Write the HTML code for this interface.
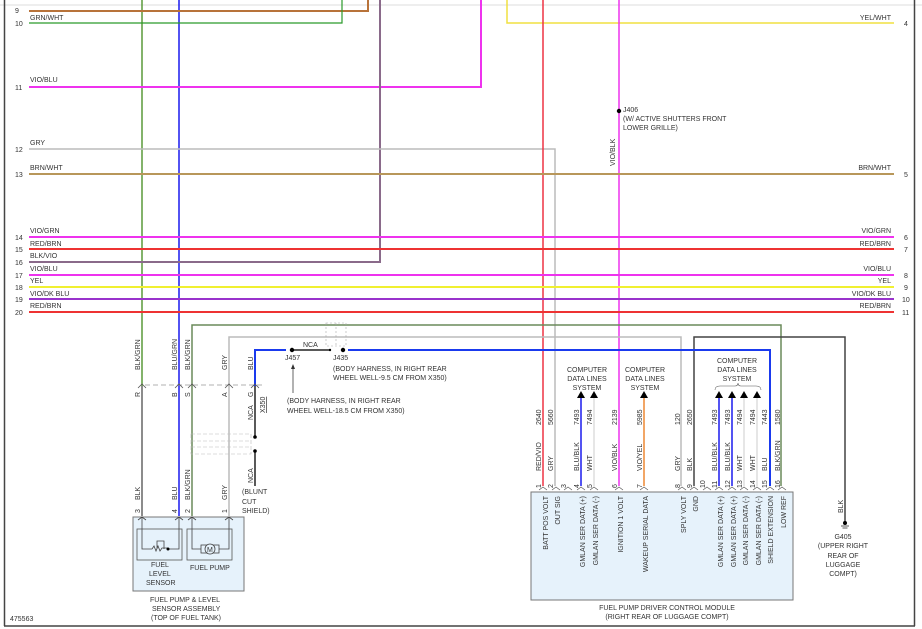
<!DOCTYPE html>
<html><head><meta charset="utf-8"><style>
html,body{margin:0;padding:0;background:#fff;}
svg{display:block;font-family:"Liberation Sans",Arial,sans-serif;}
text{fill:#333;font-size:7px;}
</style></head><body>
<svg width="922" height="629" viewBox="0 0 922 629" xmlns="http://www.w3.org/2000/svg">
<!-- frame -->
<line x1="0" y1="5" x2="922" y2="5" stroke="#ddd" stroke-width="1"/>
<line x1="4.5" y1="0" x2="4.5" y2="626" stroke="#444" stroke-width="1.5"/>
<line x1="914.5" y1="0" x2="914.5" y2="626" stroke="#444" stroke-width="1.5"/>
<line x1="4" y1="626" x2="915" y2="626" stroke="#444" stroke-width="1.5"/>

<!-- verticals from top -->
<line x1="142" y1="0" x2="142" y2="386" stroke="#5a9a3a" stroke-width="1.5"/>
<line x1="179" y1="0" x2="179" y2="386" stroke="#1a1aee" stroke-width="1.5"/>
<polyline points="368,0 368,11 29,11" fill="none" stroke="#b8733a" stroke-width="2"/>
<polyline points="342,0 342,23 29,23" fill="none" stroke="#2a9a2a" stroke-width="1.2"/>
<polyline points="481,0 481,87 29,87" fill="none" stroke="#ee33ee" stroke-width="2"/>
<polyline points="380,0 380,262 29,262" fill="none" stroke="#8a6a8a" stroke-width="2"/>
<polyline points="507,0 507,23 894,23" fill="none" stroke="#f0e040" stroke-width="1.5"/>
<polyline points="29,149 555,149 555,486" fill="none" stroke="#bbb" stroke-width="1.5"/>
<line x1="543" y1="0" x2="543" y2="486" stroke="#ee3344" stroke-width="1.5"/>
<line x1="619" y1="0" x2="619" y2="486" stroke="#ee33ee" stroke-width="1.5"/>
<circle cx="619" cy="111" r="2.2" fill="#000"/>
<text x="623" y="112">J406</text>
<text x="623" y="121">(W/ ACTIVE SHUTTERS FRONT</text>
<text x="623" y="130">LOWER GRILLE)</text>
<text transform="translate(615,166) rotate(-90)">VIO/BLK</text>

<!-- horizontal rows -->
<line x1="29" y1="174" x2="894" y2="174" stroke="#b8975a" stroke-width="2"/>
<line x1="29" y1="237" x2="894" y2="237" stroke="#ee33ee" stroke-width="2"/>
<line x1="29" y1="249" x2="894" y2="249" stroke="#ee3333" stroke-width="2"/>
<line x1="29" y1="275" x2="894" y2="275" stroke="#ee33ee" stroke-width="2"/>
<line x1="29" y1="287" x2="894" y2="287" stroke="#f0f030" stroke-width="2"/>
<line x1="29" y1="299" x2="894" y2="299" stroke="#9933cc" stroke-width="2"/>
<line x1="29" y1="312" x2="894" y2="312" stroke="#ee3333" stroke-width="2"/>

<!-- left labels -->
<g>
<text x="15" y="13">9</text><text x="15" y="26">10</text>
<text x="30" y="20">GRN/WHT</text>
<text x="30" y="82">VIO/BLU</text><text x="15" y="90">11</text>
<text x="30" y="145">GRY</text><text x="15" y="152">12</text>
<text x="30" y="170">BRN/WHT</text><text x="15" y="177">13</text>
<text x="30" y="233">VIO/GRN</text><text x="15" y="240">14</text>
<text x="30" y="246">RED/BRN</text><text x="15" y="252">15</text>
<text x="30" y="258">BLK/VIO</text><text x="15" y="265">16</text>
<text x="30" y="271">VIO/BLU</text><text x="15" y="278">17</text>
<text x="30" y="283">YEL</text><text x="15" y="290">18</text>
<text x="30" y="296">VIO/DK BLU</text><text x="15" y="302">19</text>
<text x="30" y="308">RED/BRN</text><text x="15" y="315">20</text>
</g>
<g text-anchor="end">
<text x="891" y="20">YEL/WHT</text>
<text x="891" y="170">BRN/WHT</text>
<text x="891" y="233">VIO/GRN</text>
<text x="891" y="246">RED/BRN</text>
<text x="891" y="271">VIO/BLU</text>
<text x="891" y="283">YEL</text>
<text x="891" y="296">VIO/DK BLU</text>
<text x="891" y="308">RED/BRN</text>
</g>
<g>
<text x="904" y="26">4</text><text x="904" y="177">5</text><text x="904" y="240">6</text>
<text x="904" y="252">7</text><text x="904" y="278">8</text><text x="904" y="290">9</text>
<text x="902" y="302">10</text><text x="902" y="315">11</text>
</g>

<!-- lower harness -->
<polyline points="192,516 192,325 781,325 781,486" fill="none" stroke="#6a8a5a" stroke-width="1.5"/>
<polyline points="229,516 229,337 681,337 681,486" fill="none" stroke="#bbb" stroke-width="1.5"/>
<polyline points="694,486 694,337 845,337 845,522" fill="none" stroke="#444" stroke-width="1.5"/>
<polyline points="255,386 255,350 286,350" fill="none" stroke="#1a3aee" stroke-width="2"/>
<line x1="292" y1="350" x2="330" y2="350" stroke="#222" stroke-width="1.5"/>
<polyline points="348,350 770,350 770,486" fill="none" stroke="#1a3aee" stroke-width="2"/>
<circle cx="292" cy="350" r="2.2" fill="#000"/><circle cx="343" cy="350" r="2.2" fill="#000"/>
<circle cx="330" cy="350" r="1.2" fill="#000"/>
<rect x="326" y="323" width="20" height="23" fill="none" stroke="#aaa" stroke-width="0.6" stroke-dasharray="2,2"/>
<line x1="336" y1="323" x2="336" y2="346" stroke="#aaa" stroke-width="0.6" stroke-dasharray="2,2"/>
<text x="303" y="347">NCA</text>
<text x="285" y="360">J457</text><text x="333" y="360">J435</text>
<text x="333" y="371">(BODY HARNESS, IN RIGHT REAR</text>
<text x="333" y="380">WHEEL WELL-9.5 CM FROM X350)</text>
<line x1="293" y1="367" x2="293" y2="393" stroke="#666" stroke-width="1"/>
<polygon points="293,364 291,369 295,369" fill="#333"/>
<text x="287" y="403">(BODY HARNESS, IN RIGHT REAR</text>
<text x="287" y="413">WHEEL WELL-18.5 CM FROM X350)</text>

<!-- connector X350 -->
<line x1="145" y1="385" x2="262" y2="385" stroke="#999" stroke-width="0.8" stroke-dasharray="5,3"/>
<g fill="none" stroke="#555" stroke-width="0.8">
<path d="M138,388 L142,384 L146,388"/><path d="M175,388 L179,384 L183,388"/>
<path d="M188,388 L192,384 L196,388"/><path d="M225,388 L229,384 L233,388"/>
<path d="M251,388 L255,384 L259,388"/>
</g>
<line x1="142" y1="386" x2="142" y2="516" stroke="#666" stroke-width="1.5"/>
<line x1="179" y1="386" x2="179" y2="516" stroke="#1a1aee" stroke-width="1.5"/>
<line x1="255" y1="386" x2="255" y2="437" stroke="#222" stroke-width="1.5"/>
<line x1="255" y1="451" x2="255" y2="486" stroke="#222" stroke-width="1.5"/>
<circle cx="255" cy="437" r="1.8" fill="#000"/><circle cx="255" cy="451" r="1.8" fill="#000"/>
<rect x="191" y="434" width="60" height="20" fill="none" stroke="#bbb" stroke-width="0.6" stroke-dasharray="4,2"/>
<line x1="191" y1="441" x2="251" y2="441" stroke="#bbb" stroke-width="0.6" stroke-dasharray="4,2"/>
<line x1="191" y1="447" x2="251" y2="447" stroke="#bbb" stroke-width="0.6" stroke-dasharray="4,2"/>
<text transform="translate(140,370) rotate(-90)">BLK/GRN</text>
<text transform="translate(177,370) rotate(-90)">BLU/GRN</text>
<text transform="translate(190,370) rotate(-90)">BLK/GRN</text>
<text transform="translate(227,370) rotate(-90)">GRY</text>
<text transform="translate(253,370) rotate(-90)">BLU</text>
<text transform="translate(140,397) rotate(-90)">R</text>
<text transform="translate(177,397) rotate(-90)">B</text>
<text transform="translate(190,397) rotate(-90)">S</text>
<text transform="translate(227,397) rotate(-90)">A</text>
<text transform="translate(253,397) rotate(-90)">G</text>
<text transform="translate(265,413) rotate(-90)" style="text-decoration:underline">X350</text>
<text transform="translate(253,420) rotate(-90)">NCA</text>
<text transform="translate(253,483) rotate(-90)">NCA</text>
<text x="242" y="494">(BLUNT</text><text x="242" y="504">CUT</text><text x="242" y="513">SHIELD)</text>
<text transform="translate(140,500) rotate(-90)">BLK</text>
<text transform="translate(177,500) rotate(-90)">BLU</text>
<text transform="translate(190,500) rotate(-90)">BLK/GRN</text>
<text transform="translate(227,500) rotate(-90)">GRY</text>
<text transform="translate(140,513) rotate(-90)">3</text>
<text transform="translate(177,513) rotate(-90)">4</text>
<text transform="translate(190,513) rotate(-90)">2</text>
<text transform="translate(227,513) rotate(-90)">1</text>

<!-- fuel pump assembly -->
<rect x="133" y="517" width="111" height="74" fill="#e6f2fb" stroke="#777" stroke-width="1"/>
<rect x="137" y="529" width="45" height="31" fill="none" stroke="#555" stroke-width="0.8"/>
<rect x="187" y="529" width="45" height="31" fill="none" stroke="#555" stroke-width="0.8"/>
<g fill="none" stroke="#444" stroke-width="0.8">
<path d="M138,520 L142,517 L146,520 M175,520 L179,517 L183,520 M188,520 L192,517 L196,520 M225,520 L229,517 L233,520"/>
<path d="M142,518 V549 H152 l2,-3 2,5 2,-5 2,5 2,-3 H168 M179,518 V549 H168 M157,549 V541 H164 V549"/>
<path d="M192,518 V549 H201 M229,518 V549 H219"/>
<rect x="201" y="545" width="18" height="8"/>
</g>
<circle cx="210" cy="549" r="5" fill="#e6f2fb" stroke="#444" stroke-width="0.8"/>
<text x="207" y="552" font-size="6">M</text>
<circle cx="168" cy="549" r="1.5" fill="#000"/>
<text x="151" y="567">FUEL</text><text x="149" y="576">LEVEL</text><text x="146" y="585">SENSOR</text>
<text x="190" y="570">FUEL PUMP</text>
<text x="150" y="602">FUEL PUMP &amp; LEVEL</text>
<text x="152" y="611">SENSOR ASSEMBLY</text>
<text x="151" y="620">(TOP OF FUEL TANK)</text>
<text x="10" y="621">475563</text>

<!-- module wires -->
<line x1="581" y1="397" x2="581" y2="486" stroke="#1a1aee" stroke-width="1.5"/>
<line x1="594" y1="397" x2="594" y2="486" stroke="#ddd" stroke-width="1.5"/>
<line x1="644" y1="397" x2="644" y2="486" stroke="#ee8833" stroke-width="1.5"/>
<line x1="719" y1="397" x2="719" y2="486" stroke="#1a1aee" stroke-width="1.5"/>
<line x1="732" y1="397" x2="732" y2="486" stroke="#1a1aee" stroke-width="1.5"/>
<line x1="744" y1="397" x2="744" y2="486" stroke="#ddd" stroke-width="1.5"/>
<line x1="757" y1="397" x2="757" y2="486" stroke="#ddd" stroke-width="1.5"/>
<g fill="#000">
<polygon points="581,391 577,398 585,398"/><polygon points="594,391 590,398 598,398"/>
<polygon points="644,391 640,398 648,398"/>
<polygon points="719,391 715,398 723,398"/><polygon points="732,391 728,398 736,398"/>
<polygon points="744,391 740,398 748,398"/><polygon points="757,391 753,398 761,398"/>
</g>
<path d="M715,390 Q715,386 720,386 L735,386 Q738,386 738,383 Q738,386 741,386 L756,386 Q761,386 761,390" fill="none" stroke="#555" stroke-width="0.6"/>
<g text-anchor="middle">
<text x="587" y="372">COMPUTER</text><text x="587" y="381">DATA LINES</text><text x="587" y="390">SYSTEM</text>
<text x="645" y="372">COMPUTER</text><text x="645" y="381">DATA LINES</text><text x="645" y="390">SYSTEM</text>
<text x="737" y="363">COMPUTER</text><text x="737" y="372">DATA LINES</text><text x="737" y="381">SYSTEM</text>
</g>
<g>
<text transform="translate(541,425) rotate(-90)">2640</text>
<text transform="translate(553,425) rotate(-90)">5660</text>
<text transform="translate(579,425) rotate(-90)">7493</text>
<text transform="translate(592,425) rotate(-90)">7494</text>
<text transform="translate(617,425) rotate(-90)">2139</text>
<text transform="translate(642,425) rotate(-90)">5985</text>
<text transform="translate(680,425) rotate(-90)">120</text>
<text transform="translate(692,425) rotate(-90)">2650</text>
<text transform="translate(717,425) rotate(-90)">7493</text>
<text transform="translate(730,425) rotate(-90)">7493</text>
<text transform="translate(742,425) rotate(-90)">7494</text>
<text transform="translate(755,425) rotate(-90)">7494</text>
<text transform="translate(767,425) rotate(-90)">7443</text>
<text transform="translate(780,425) rotate(-90)">1580</text>
<text transform="translate(541,471) rotate(-90)">RED/VIO</text>
<text transform="translate(553,471) rotate(-90)">GRY</text>
<text transform="translate(579,471) rotate(-90)">BLU/BLK</text>
<text transform="translate(592,471) rotate(-90)">WHT</text>
<text transform="translate(617,471) rotate(-90)">VIO/BLK</text>
<text transform="translate(642,471) rotate(-90)">VIO/YEL</text>
<text transform="translate(680,471) rotate(-90)">GRY</text>
<text transform="translate(692,471) rotate(-90)">BLK</text>
<text transform="translate(717,471) rotate(-90)">BLU/BLK</text>
<text transform="translate(730,471) rotate(-90)">BLU/BLK</text>
<text transform="translate(742,471) rotate(-90)">WHT</text>
<text transform="translate(755,471) rotate(-90)">WHT</text>
<text transform="translate(767,471) rotate(-90)">BLU</text>
<text transform="translate(780,471) rotate(-90)">BLK/GRN</text>
</g>
<g>
<text transform="translate(541,488) rotate(-90)">1</text><text transform="translate(553,488) rotate(-90)">2</text>
<text transform="translate(566,488) rotate(-90)">3</text><text transform="translate(579,488) rotate(-90)">4</text>
<text transform="translate(592,488) rotate(-90)">5</text><text transform="translate(617,488) rotate(-90)">6</text>
<text transform="translate(642,488) rotate(-90)">7</text><text transform="translate(680,488) rotate(-90)">8</text>
<text transform="translate(692,488) rotate(-90)">9</text><text transform="translate(705,488) rotate(-90)">10</text>
<text transform="translate(717,488) rotate(-90)">11</text><text transform="translate(730,488) rotate(-90)">12</text>
<text transform="translate(742,488) rotate(-90)">13</text><text transform="translate(755,488) rotate(-90)">14</text>
<text transform="translate(767,488) rotate(-90)">15</text><text transform="translate(780,488) rotate(-90)">16</text>
</g>
<g fill="none" stroke="#555" stroke-width="0.7">
<path d="M539,490 l4,-3 4,3 M552,490 l4,-3 4,3 M564,490 l4,-3 4,3 M577,490 l4,-3 4,3 M590,490 l4,-3 4,3 M615,490 l4,-3 4,3 M640,490 l4,-3 4,3 M678,490 l4,-3 4,3 M690,490 l4,-3 4,3 M703,490 l4,-3 4,3 M715,490 l4,-3 4,3 M728,490 l4,-3 4,3 M740,490 l4,-3 4,3 M753,490 l4,-3 4,3 M766,490 l4,-3 4,3 M778,490 l4,-3 4,3"/>
</g>
<rect x="531" y="492" width="262" height="108" fill="#e6f2fb" stroke="#777" stroke-width="1"/>
<g text-anchor="end">
<text transform="translate(548,496) rotate(-90)">BATT POS VOLT</text>
<text transform="translate(560,496) rotate(-90)">OUT SIG</text>
<text transform="translate(585,496) rotate(-90)">GMLAN SER DATA (+)</text>
<text transform="translate(598,496) rotate(-90)">GMLAN SER DATA (-)</text>
<text transform="translate(623,496) rotate(-90)">IGNITION 1 VOLT</text>
<text transform="translate(648,496) rotate(-90)">WAKEUP SERIAL DATA</text>
<text transform="translate(686,496) rotate(-90)">SPLY VOLT</text>
<text transform="translate(698,496) rotate(-90)">GND</text>
<text transform="translate(723,496) rotate(-90)">GMLAN SER DATA (+)</text>
<text transform="translate(736,496) rotate(-90)">GMLAN SER DATA (+)</text>
<text transform="translate(748,496) rotate(-90)">GMLAN SER DATA (-)</text>
<text transform="translate(761,496) rotate(-90)">GMLAN SER DATA (-)</text>
<text transform="translate(773,496) rotate(-90)">SHIELD EXTENSION</text>
<text transform="translate(786,496) rotate(-90)">LOW REF</text>
</g>
<g text-anchor="middle">
<text x="667" y="610">FUEL PUMP DRIVER CONTROL MODULE</text>
<text x="667" y="619">(RIGHT REAR OF LUGGAGE COMPT)</text>
</g>
<!-- ground -->
<text transform="translate(843,513) rotate(-90)">BLK</text>
<circle cx="845" cy="523" r="2" fill="#000"/>
<line x1="841" y1="526" x2="849" y2="526" stroke="#333" stroke-width="0.8"/>
<line x1="842.5" y1="528" x2="847.5" y2="528" stroke="#333" stroke-width="0.8"/>
<g text-anchor="middle">
<text x="843" y="539">G405</text>
<text x="843" y="548">(UPPER RIGHT</text>
<text x="843" y="558">REAR OF</text>
<text x="843" y="567">LUGGAGE</text>
<text x="843" y="576">COMPT)</text>
</g>
</svg>
</body></html>
